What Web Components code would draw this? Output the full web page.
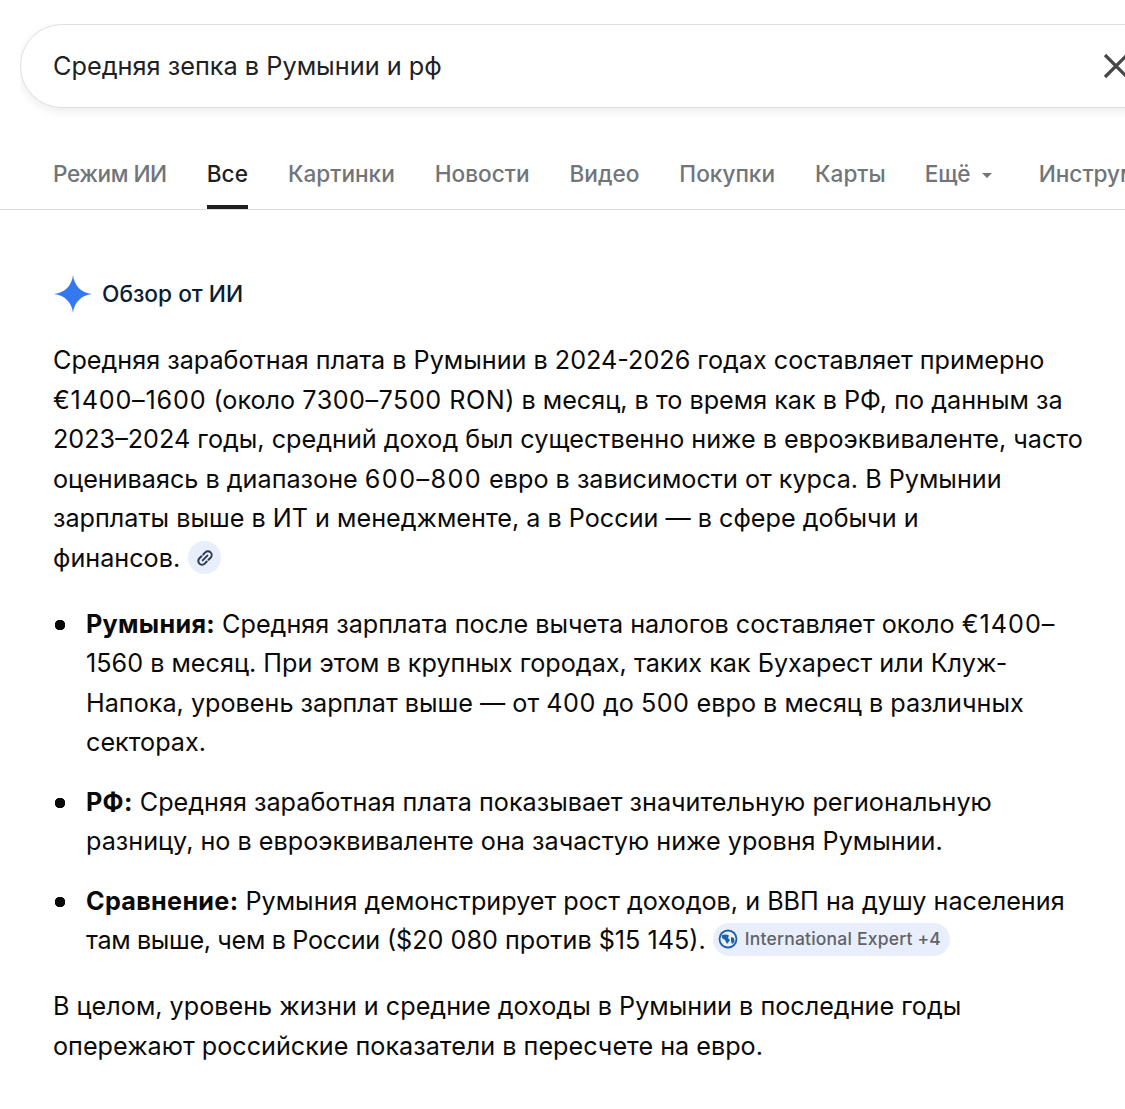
<!DOCTYPE html>
<html lang="ru">
<head>
<meta charset="utf-8">
<title>Средняя зепка в Румынии и рф</title>
<style>
  html, body { margin: 0; padding: 0; background: #fff; }
  body { width: 1125px; height: 1109px; overflow: hidden; font-family: Inter, "Noto Sans", sans-serif; }
</style>
</head>
<body>
<search-page></search-page>
<script>
const font = 'Inter, "Noto Sans", "Liberation Sans", sans-serif';

class SearchBox extends HTMLElement {
  constructor() {
    super();
    this.attachShadow({ mode: 'open' });
    this.shadowRoot.innerHTML = `
      <style>
        :host { display: block; padding: 24px 0 0 20px; overflow: hidden; }
        .box {
          width: 1200px; height: 82px;
          display: flex; align-items: center; justify-content: space-between;
          border: 1px solid #dfe1e5; border-radius: 42px; background: #fff;
          box-shadow: 0 3px 10px rgba(32,33,36,.09);
          padding-left: 32px; font: 400 25.3px/36px ${font}; color: #202124;
        }
        svg { display: block; margin-right: 124px; flex: none; }
        .wrap { padding-bottom: 14px; overflow: hidden; }
      </style>
      <div class="wrap"><div class="box"><span><slot></slot></span>
        <svg width="26" height="26" viewBox="0 0 26 26"><path d="M2 2 24 24M24 2 2 24" stroke="#474747" stroke-width="3.2" fill="none"/></svg>
      </div></div>`;
  }
}

class SearchTab extends HTMLElement {
  constructor() {
    super();
    this.attachShadow({ mode: 'open' });
    this.shadowRoot.innerHTML = `
      <style>
        :host { display: block; flex: none; color: #70757a; font: 500 22.6px/30px ${font}; }
        :host([tight]) { letter-spacing: -.45px; }
        :host([active]) { color: #1f1f1f; }
        :host([more]) { margin-left: -1px; margin-right: 7px; }
        .t { display: flex; align-items: center; gap: 11px; height: 65px; box-sizing: border-box; padding-bottom: 2px; border-bottom: 4px solid transparent; }
        :host([active]) .t { border-bottom-color: #1f1f1f; }
        :host([more]) .t::after { content: ""; border: 5.5px solid transparent; border-top: 5.5px solid #70757a; border-bottom: 0; margin-top: 3px; }
      </style>
      <div class="t"><slot></slot></div>`;
  }
}

class SearchTabs extends HTMLElement {
  constructor() {
    super();
    this.attachShadow({ mode: 'open' });
    this.shadowRoot.innerHTML = `
      <style>
        :host { display: flex; gap: 40px; padding-left: 53px; margin-top: 22px; height: 65px; border-bottom: 1px solid #dadce0; overflow: hidden; white-space: nowrap; }
      </style>
      <slot></slot>`;
  }
}

class AiHeader extends HTMLElement {
  constructor() {
    super();
    this.attachShadow({ mode: 'open' });
    this.shadowRoot.innerHTML = `
      <style>
        :host { display: flex; align-items: center; gap: 10px; padding: 65px 0 0 54px; font: 500 22.7px/38px ${font}; color: #0a1d33; }
      </style>
      <svg width="38" height="38" viewBox="0 0 38 38"><path d="M19 0C20 10 27 18 38 19 27 20 20 28 19 38 18 28 11 20 0 19 11 18 18 10 19 0Z" fill="#3478f0"/></svg>
      <span><slot></slot></span>`;
  }
}

class LinkChip extends HTMLElement {
  constructor() {
    super();
    this.attachShadow({ mode: 'open' });
    this.shadowRoot.innerHTML = `
      <style>
        :host { display: inline-flex; width: 33px; height: 33px; margin-left: 1px; border-radius: 50%; background: #e8eefc; align-items: center; justify-content: center; vertical-align: -1px; }
      </style>
      <svg width="20" height="20" viewBox="0 0 24 24" fill="none" stroke="#2f3b4f" stroke-width="2.4" stroke-linecap="round"><g transform="rotate(-45 12 12)"><path d="M10.500 7.500H7a4.500 4.500 0 0 0 0 9h3.500M13.500 7.500H17a4.500 4.500 0 0 1 0 9h-3.500M8 12h8"/></g></svg>`;
  }
}

class SourceChip extends HTMLElement {
  constructor() {
    super();
    this.attachShadow({ mode: 'open' });
    this.shadowRoot.innerHTML = `
      <style>
        :host { display: inline-flex; align-items: center; height: 33px; gap: 7px; padding: 0 9px 0 5px; border-radius: 17px; background: #e8eefc; color: #5f6368; font: 500 17.5px/24px ${font}; vertical-align: 0; letter-spacing: .2px; }
        svg { flex: none; }
      </style>
      <svg width="20" height="20" viewBox="0 0 20 20"><circle cx="10" cy="10" r="9.400" fill="#1f5fa8"/><circle cx="10" cy="10" r="7.600" fill="#e8f0f8"/><path d="M3.500 6.500C6 5 9 5 11 6.500L10 9l2 2-3 4-2-4-3-2Z" fill="#1f5fa8"/><path d="M13 8l3 1 .5 4-2.500 2-1-3Z" fill="#1f5fa8"/></svg>
      <span><slot></slot></span>`;
  }
}

class SearchPage extends HTMLElement {
  constructor() {
    super();
    this.attachShadow({ mode: 'open' });
    this.shadowRoot.innerHTML = `
      <style>
        :host { display: block; font-family: ${font}; }
        .txt { padding: 0 30px 0 53px; font: 400 25.2px/39.5px ${font}; color: #0a0a0a; }
        p { margin: 0; }
        .lead { margin-top: 28px; }
        ul { margin: 26.5px 0 0; padding: 0; list-style: none; }
        li { margin-bottom: 20px; padding-left: 33px; background: radial-gradient(circle at 7px 20px, #0a0a0a 5px, transparent 5.500px) no-repeat; }
        b { font-weight: 700; letter-spacing: .3px; }
        .end { margin-top: 26.5px; }
        .d1 { letter-spacing: .8px; }
        .d2 { letter-spacing: .5px; }
        .d3 { letter-spacing: 1.4px; }
        .d4 { letter-spacing: 1px; }
        .n { letter-spacing: -.35px; }
      </style>
      <search-box>Средняя зепка в Румынии и рф</search-box>
      <search-tabs>
        <search-tab tight>Режим ИИ</search-tab>
        <search-tab active>Все</search-tab>
        <search-tab>Картинки</search-tab>
        <search-tab>Новости</search-tab>
        <search-tab>Видео</search-tab>
        <search-tab>Покупки</search-tab>
        <search-tab>Карты</search-tab>
        <search-tab more>Ещё</search-tab>
        <search-tab>Инструменты</search-tab>
      </search-tabs>
      <ai-header>Обзор от ИИ</ai-header>
      <div class="txt">
        <p class="lead">Средняя заработная плата в Румынии в 2024-2026 годах составляет примерно <span class="d1">€1400–1600</span> (около <span class="d2">7300–7500 RON</span>) в месяц, в то время как в РФ, по данным за 2023–2024 годы, средний доход был существенно ниже в евроэквиваленте, часто оцениваясь в диапазоне <span class="d3">600–800</span> евро в зависимости от курса. В Румынии зарплаты выше в ИТ и менеджменте, а в России — в сфере добычи и<br>финансов. <link-chip></link-chip></p>
        <ul>
          <li><b>Румыния:</b> Средняя зарплата после вычета налогов составляет около <span class="d4">€1400–</span>1560 в месяц. При этом в крупных городах, таких как Бухарест или Клуж-Напока, уровень зарплат выше — от <span class="d2">400</span> до <span class="d2">500</span> евро в месяц в различных секторах.</li>
          <li><b>РФ:</b> Средняя заработная плата показывает значительную региональную разницу, но в евроэквиваленте она зачастую ниже уровня Румынии.</li>
          <li style="margin-bottom:0"><b>Сравнение:</b> Румыния демонстрирует рост доходов, и ВВП на душу населения <span class="n">там выше, чем в России</span> ($20 080 против $15 145). <source-chip>International Expert +4</source-chip></li>
        </ul>
        <p class="end">В целом, уровень жизни и средние доходы в Румынии в последние годы опережают российские показатели в пересчете на евро.</p>
      </div>`;
  }
}

customElements.define('search-box', SearchBox);
customElements.define('search-tab', SearchTab);
customElements.define('search-tabs', SearchTabs);
customElements.define('ai-header', AiHeader);
customElements.define('link-chip', LinkChip);
customElements.define('source-chip', SourceChip);
customElements.define('search-page', SearchPage);
</script>
</body>
</html>
